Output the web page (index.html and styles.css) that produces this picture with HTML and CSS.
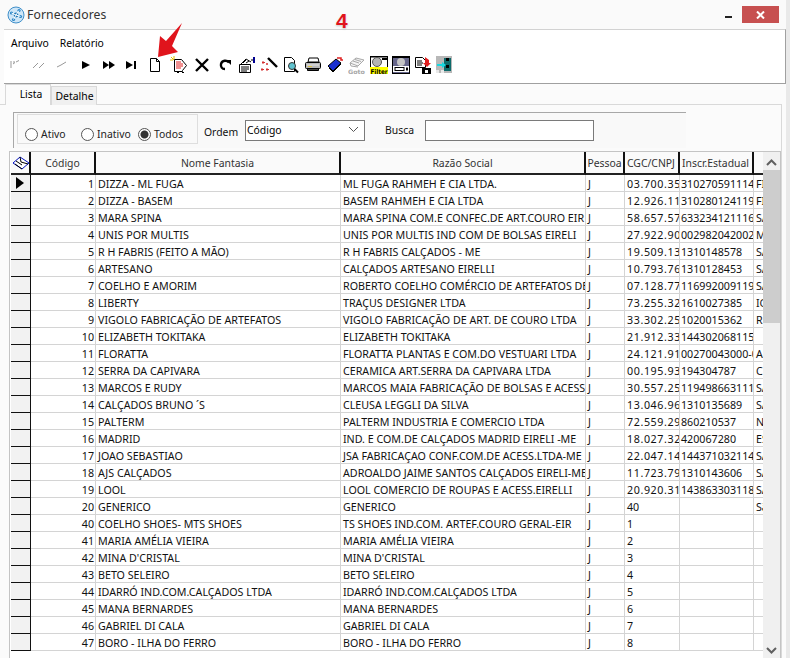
FILE: index.html
```html
<!DOCTYPE html>
<html lang="pt">
<head>
<meta charset="utf-8">
<title>Fornecedores</title>
<link rel="stylesheet" href="styles.css">
</head>
<body>
<div class="window">
  <header class="titlebar">
    <svg class="app-icon" width="18" height="18" viewBox="0 0 18 18"><circle cx="9" cy="9" r="8" fill="#cfe6f7" stroke="#3f8fc9"/><circle cx="9" cy="9" r="2.400" fill="#1f78b8"/><circle cx="4.500" cy="7" r="1.600" fill="#2a86c8"/><circle cx="12" cy="4.500" r="1.600" fill="#2a86c8"/><circle cx="13.500" cy="10.500" r="1.600" fill="#2a86c8"/><circle cx="6.500" cy="13.500" r="1.600" fill="#2a86c8"/><path d="M9 9L4.500 7M9 9L12 4.500M9 9l4.500 1.500M9 9l-2.500 4.500" stroke="#fff"/></svg>
    <span class="title">Fornecedores</span>
    <span class="minimize"></span>
    <span class="close"><svg width="9" height="8" viewBox="0 0 9 8"><path d="M1 .5L8 7.500M8 .5L1 7.500" stroke="#fff" stroke-width="2"/></svg></span>
  </header>

  <section class="toolbar-panel">
    <nav class="menu"><span>Arquivo</span><span>Relatório</span></nav>
    <div class="tools">
      <span class="tool"><svg width="16" height="16" viewBox="0 0 16 16"><path d="M3 4v7M5 5h2M8 5l3-1.500M5 7l2-1.500" stroke="#999" fill="none"/></svg></span>
      <span class="tool"><svg width="16" height="16" viewBox="0 0 16 16"><path d="M2 11l5-5M8 11l5-5" stroke="#999" fill="none"/></svg></span>
      <span class="tool"><svg width="16" height="16" viewBox="0 0 16 16"><path d="M3 10l4-2M7 8l5-3" stroke="#999" fill="none"/></svg></span>
      <span class="tool"><svg width="16" height="16" viewBox="0 0 16 16"><path d="M4 4l8 4-8 4z"/></svg></span>
      <span class="tool"><svg width="16" height="16" viewBox="0 0 16 16"><path d="M2 4l6 4-6 4zM8 4l6 4-6 4z"/></svg></span>
      <span class="tool"><svg width="16" height="16" viewBox="0 0 16 16"><path d="M2 4l7 4-7 4zM10 4h2v8h-2z"/></svg></span>
      <span class="tool"><svg width="16" height="16" viewBox="0 0 16 16"><path d="M3.500 1.500h6l3 3v10h-9zM9.500 1.500v3h3" fill="#fff" stroke="#000"/></svg></span>
      <span class="tool"><svg width="18" height="18" viewBox="0 0 18 18"><path d="M4.500 3.500h7l5 6-4 5v1h-8z" fill="#fff" stroke="#000"/><path d="M6 6h5M6 8h7M6 10h7M6 12h5" stroke="#e02020"/><path d="M1 1l3 3M4 0v3M0 4h3" stroke="#e8c000"/><path d="M12 16.500h2M7 16.500h2" stroke="#000"/></svg></span>
      <span class="tool"><svg width="16" height="16" viewBox="0 0 16 16"><path d="M2 2l12 12M14 2L2 14" stroke="#000" stroke-width="2.400"/></svg></span>
      <span class="tool"><svg width="16" height="16" viewBox="0 0 16 16"><path d="M12 5.500C10 3 5 3 4 7c-.5 3 1 5 4 5" fill="none" stroke="#000" stroke-width="2.400"/><path d="M9 3h5v5z"/></svg></span>
      <span class="tool"><svg width="18" height="18" viewBox="0 0 18 18"><path d="M1.500 8.500h11v8h-11z" fill="#fff" stroke="#000"/><path d="M3 11h8M3 13h8M3 15h6" stroke="#000"/><path d="M3 8l5-5 5 3" fill="#fff" stroke="#000"/><path d="M5 7l3-3M8 7l3-2" stroke="#000"/><path d="M15 1h2v6h-2z" fill="#000090"/><path d="M13 4h2" stroke="#000"/></svg></span>
      <span class="tool"><svg width="18" height="18" viewBox="0 0 18 18"><path d="M8 2l9 9" stroke="#000" stroke-width="2.400"/><path d="M3 5v3M2 6.500h3M2 12v3M1 13.500h3M7 12v3M6 13.500h3M7 7v2M6 8h2" stroke="#d43030"/></svg></span>
      <span class="tool"><svg width="18" height="18" viewBox="0 0 18 18"><path d="M2.500 1.500h7l3 3v11h-10z" fill="#fff" stroke="#000"/><circle cx="10" cy="10" r="3.500" fill="#5fc3cf" stroke="#333"/><path d="M12.500 13l3.500 3.500" stroke="#000" stroke-width="2"/></svg></span>
      <span class="tool"><svg width="18" height="18" viewBox="0 0 18 18"><path d="M5 2h9l1 4H4z" fill="#fff" stroke="#000"/><path d="M1.500 7.500q0-1 1-1h13q1 0 1 1v4q0 1-1 1h-13q-1 0-1-1z" fill="#b8b8b8" stroke="#000"/><path d="M3 9h12" stroke="#e8e8e8"/><path d="M4 10.500h4" stroke="#d8c040"/><path d="M3.500 12.500h11v2h-11z" fill="#444" stroke="#000"/></svg></span>
      <span class="tool"><svg width="18" height="18" viewBox="0 0 18 18"><path d="M2 10l8-7 5 4-8 8z" fill="#1a2fd0" stroke="#000"/><path d="M3 12l4 4 8-8" fill="none" stroke="#000"/><path d="M11 2h4v2h2" fill="none" stroke="#e02020" stroke-width="1.500"/></svg></span>
      <span class="tool"><svg width="18" height="18" viewBox="0 0 18 18"><path d="M2 7l6-5 8 2-6 6z" fill="#f4f4f4" stroke="#a8a8a8"/><path d="M2 7l1 3 7 1M5 5l6 2M7 3.500l6 2" fill="none" stroke="#a8a8a8"/><text class="goto-label" x="0" y="17.500" textLength="17" lengthAdjust="spacingAndGlyphs">Goto</text></svg></span>
      <span class="tool"><svg width="18" height="18" viewBox="0 0 18 18"><rect width="18" height="18" fill="#fff"/><path d="M0 .5h18" stroke="#000" stroke-width="2"/><path d="M12 3h6" stroke="#000" stroke-width="2"/><path d="M.5 0v12M17.500 0v12" stroke="#000"/><circle cx="7" cy="6" r="4.500" fill="#b4b4b4" stroke="#555"/><rect y="11" width="18" height="7" fill="#ffff00"/><text class="filter-label" x=".5" y="17.500" textLength="17" lengthAdjust="spacingAndGlyphs">Filter</text></svg></span>
      <span class="tool"><svg width="18" height="18" viewBox="0 0 18 18"><rect width="18" height="18" fill="#000"/><rect x="1" y="2" width="16" height="15" fill="#66668a"/><circle cx="9" cy="6" r="4" fill="#c4c4c4"/><rect x="1" y="10" width="16" height="6" fill="#fff"/><rect x="3" y="11.500" width="9" height="3" fill="#fff" stroke="#000"/><rect x="14" y="11.500" width="2" height="3" fill="#000"/></svg></span>
      <span class="tool"><svg width="18" height="18" viewBox="0 0 18 18"><path d="M1.500 1.500h7l3 3v7h-10z" fill="#fff" stroke="#000"/><path d="M3 5h5M3 7h6M3 9h5" stroke="#000"/><path d="M11 1v6h-2l4 4 4-4h-2V4z" fill="#e02020"/><path d="M8 12h9v6H8z"/><path d="M11 14h3v3h-3z" fill="#fff"/></svg></span>
      <span class="tool"><svg width="18" height="18" viewBox="0 0 18 18"><rect width="16" height="17" fill="#b8b8b8"/><path d="M8 2h7v13H8z" fill="#0d6b6b"/><path d="M10 2h3v3h-3zM10 9h3v3h-3z" fill="#000"/><path d="M1 9h7" stroke="#18d8e0" stroke-width="2"/><path d="M6 6l4 3-4 3z" fill="#18d8e0"/><path d="M0 14h3v3H0zM5 14h3v3H5z" fill="#e8e8e8"/></svg></span>
    </div>
  </section>

  <div class="tabs">
    <span class="tab tab-active">Lista</span>
    <span class="tab">Detalhe</span>
  </div>

  <main class="page">
    <div class="filters">
      <div class="radio-group">
        <label class="radio"><span class="dot"></span>Ativo</label>
        <label class="radio"><span class="dot"></span>Inativo</label>
        <label class="radio"><span class="dot dot-on"></span>Todos</label>
      </div>
      <span class="field-label label-ordem">Ordem</span>
      <div class="select"><span>Código</span><svg width="11" height="7" viewBox="0 0 11 7"><path d="M1 1l4.500 4.500L10 1" fill="none" stroke="#555"/></svg></div>
      <span class="field-label label-busca">Busca</span>
      <div class="input"></div>
    </div>

    <div class="grid-frame">
      <div class="grid-body">
        <table class="grid">
          <colgroup><col class="c0"><col class="c1"><col class="c2"><col class="c3"><col class="c4"><col class="c5"><col class="c6"><col class="c7"></colgroup>
          <thead>
            <tr>
              <th class="ind"><svg width="18" height="16" viewBox="0 0 18 16"><path d="M1 8l7-6 9 6-7 6z" fill="#fff" stroke="#0010c0"/><path d="M3 9l7 5M8 2l1 5 7 2M4 6l6 4" fill="none" stroke="#000"/></svg></th>
              <th>Código</th><th>Nome Fantasia</th><th>Razão Social</th><th>Pessoa</th><th class="tl">CGC/CNPJ</th><th class="tl">Inscr.Estadual</th><th class="last"></th>
            </tr>
          </thead>
          <tbody>
            <tr><td class="ind"><svg width="8" height="12" viewBox="0 0 8 12"><path d="M0 0l8 6-8 6z"/></svg></td><td class="n">1</td><td>DIZZA - ML FUGA</td><td>ML FUGA RAHMEH E CIA LTDA.</td><td>J</td><td class="w">03.700.350</td><td class="ie">310270591114</td><td>FI</td></tr>
            <tr><td class="ind"></td><td class="n">2</td><td>DIZZA - BASEM</td><td>BASEM RAHMEH E CIA LTDA</td><td>J</td><td class="w">12.926.110</td><td class="ie">310280124119</td><td>FI</td></tr>
            <tr><td class="ind"></td><td class="n">3</td><td>MARA SPINA</td><td>MARA SPINA COM.E CONFEC.DE ART.COURO EIR</td><td>J</td><td class="w">58.657.578</td><td class="ie">633234121116</td><td>SA</td></tr>
            <tr><td class="ind"></td><td class="n">4</td><td>UNIS POR MULTIS</td><td>UNIS POR MULTIS IND COM DE BOLSAS EIRELI</td><td>J</td><td class="w">27.922.900</td><td class="ie">002982042002</td><td>MG</td></tr>
            <tr><td class="ind"></td><td class="n">5</td><td>R H FABRIS (FEITO A MÃO)</td><td>R H FABRIS CALÇADOS - ME</td><td>J</td><td class="w">19.509.135</td><td class="ie">1310148578</td><td>SA</td></tr>
            <tr><td class="ind"></td><td class="n">6</td><td>ARTESANO</td><td>CALÇADOS ARTESANO EIRELLI</td><td>J</td><td class="w">10.793.762</td><td class="ie">1310128453</td><td>SA</td></tr>
            <tr><td class="ind"></td><td class="n">7</td><td>COELHO E AMORIM</td><td>ROBERTO COELHO COMÉRCIO DE ARTEFATOS DE</td><td>J</td><td class="w">07.128.779</td><td class="ie">116992009119</td><td>SA</td></tr>
            <tr><td class="ind"></td><td class="n">8</td><td>LIBERTY</td><td>TRAÇUS DESIGNER LTDA</td><td>J</td><td class="w">73.255.325</td><td class="ie">1610027385</td><td>IG</td></tr>
            <tr><td class="ind"></td><td class="n">9</td><td>VIGOLO FABRICAÇÃO DE ARTEFATOS</td><td>VIGOLO FABRICAÇÃO DE ART. DE COURO LTDA</td><td>J</td><td class="w">33.302.254</td><td class="ie">1020015362</td><td>R</td></tr>
            <tr><td class="ind"></td><td class="n">10</td><td>ELIZABETH TOKITAKA</td><td>ELIZABETH TOKITAKA</td><td>J</td><td class="w">21.912.334</td><td class="ie">144302068115</td><td></td></tr>
            <tr><td class="ind"></td><td class="n">11</td><td>FLORATTA</td><td>FLORATTA PLANTAS E COM.DO VESTUARI LTDA</td><td>J</td><td class="w">24.121.914</td><td class="ie">00270043000-0</td><td>A</td></tr>
            <tr><td class="ind"></td><td class="n">12</td><td>SERRA DA CAPIVARA</td><td>CERAMICA ART.SERRA DA CAPIVARA LTDA</td><td>J</td><td class="w">00.195.936</td><td class="ie">194304787</td><td>C</td></tr>
            <tr><td class="ind"></td><td class="n">13</td><td>MARCOS E RUDY</td><td>MARCOS MAIA FABRICAÇÃO DE BOLSAS E ACESS</td><td>J</td><td class="w">30.557.258</td><td class="ie">119498663111</td><td>SA</td></tr>
            <tr><td class="ind"></td><td class="n">14</td><td>CALÇADOS BRUNO ´S</td><td>CLEUSA LEGGLI DA SILVA</td><td>J</td><td class="w">13.046.969</td><td class="ie">1310135689</td><td>SA</td></tr>
            <tr><td class="ind"></td><td class="n">15</td><td>PALTERM</td><td>PALTERM INDUSTRIA E COMERCIO LTDA</td><td>J</td><td class="w">72.559.297</td><td class="ie">860210537</td><td>N</td></tr>
            <tr><td class="ind"></td><td class="n">16</td><td>MADRID</td><td>IND. E COM.DE CALÇADOS MADRID EIRELI -ME</td><td>J</td><td class="w">18.027.322</td><td class="ie">420067280</td><td>ES</td></tr>
            <tr><td class="ind"></td><td class="n">17</td><td>JOAO SEBASTIAO</td><td>JSA FABRICAÇAO CONF.COM.DE ACESS.LTDA-ME</td><td>J</td><td class="w">22.047.144</td><td class="ie">144371032114</td><td>SA</td></tr>
            <tr><td class="ind"></td><td class="n">18</td><td>AJS CALÇADOS</td><td>ADROALDO JAIME SANTOS CALÇADOS EIRELI-ME</td><td>J</td><td class="w">11.723.794</td><td class="ie">1310143606</td><td>SA</td></tr>
            <tr><td class="ind"></td><td class="n">19</td><td>LOOL</td><td>LOOL COMERCIO DE ROUPAS E ACESS.EIRELLI</td><td>J</td><td class="w">20.920.313</td><td class="ie">143863303118</td><td>SA</td></tr>
            <tr><td class="ind"></td><td class="n">20</td><td>GENERICO</td><td>GENERICO</td><td>J</td><td>40</td><td></td><td>Sã</td></tr>
            <tr><td class="ind"></td><td class="n">40</td><td>COELHO SHOES- MTS SHOES</td><td>TS SHOES IND.COM. ARTEF.COURO GERAL-EIR</td><td>J</td><td>1</td><td></td><td></td></tr>
            <tr><td class="ind"></td><td class="n">41</td><td>MARIA AMÉLIA VIEIRA</td><td>MARIA AMÉLIA VIEIRA</td><td>J</td><td>2</td><td></td><td></td></tr>
            <tr><td class="ind"></td><td class="n">42</td><td>MINA D'CRISTAL</td><td>MINA D'CRISTAL</td><td>J</td><td>3</td><td></td><td></td></tr>
            <tr><td class="ind"></td><td class="n">43</td><td>BETO SELEIRO</td><td>BETO SELEIRO</td><td>J</td><td>4</td><td></td><td></td></tr>
            <tr><td class="ind"></td><td class="n">44</td><td>IDARRÓ IND.COM.CALÇADOS LTDA</td><td>IDARRÓ IND.COM.CALÇADOS LTDA</td><td>J</td><td>5</td><td></td><td></td></tr>
            <tr><td class="ind"></td><td class="n">45</td><td>MANA BERNARDES</td><td>MANA BERNARDES</td><td>J</td><td>6</td><td></td><td></td></tr>
            <tr><td class="ind"></td><td class="n">46</td><td>GABRIEL DI CALA</td><td>GABRIEL DI CALA</td><td>J</td><td>7</td><td></td><td></td></tr>
            <tr><td class="ind"></td><td class="n">47</td><td>BORO - ILHA DO FERRO</td><td>BORO - ILHA DO FERRO</td><td>J</td><td>8</td><td></td><td></td></tr>
          </tbody>
        </table>
      </div>
      <div class="scrollbar">
        <svg class="sb-arrow" width="11" height="7" viewBox="0 0 11 7"><path d="M1 6l4.500-4.500L10 6" fill="none" stroke="#606060" stroke-width="2"/></svg>
        <div class="sb-thumb"></div>
        <div class="sb-track"></div>
        <svg class="sb-arrow" width="11" height="7" viewBox="0 0 11 7"><path d="M1 1l4.500 4.500L10 1" fill="none" stroke="#606060" stroke-width="2"/></svg>
      </div>
    </div>
  </main>

  <svg class="red-arrow" width="30" height="38" viewBox="0 0 30 38"><path d="M3 35L5 14l6 5L27 1 17 24l6 6z" fill="#e0141c"/></svg>
  <span class="step-number">4</span>
</div>
</body>
</html>
```
FILE: styles.css
```css
* { box-sizing: border-box; }
html, body { margin: 0; padding: 0; }
body {
  width: 790px;
  height: 658px;
  overflow: hidden;
  background: #fbfbfb;
  font-family: "Noto Sans", "Liberation Sans", sans-serif;
  font-size: 10.400px;
  color: #000;
}
.window {
  position: relative;
  width: 790px;
  height: 658px;
  display: flex;
  flex-direction: column;
  overflow: hidden;
  border-right: 4px solid #e9e9e9;
}
.titlebar {
  height: 29px;
  flex: none;
  display: flex;
  align-items: flex-start;
  padding: 6px 7px 0 7px;
  background: #fafafa;
}
.app-icon { flex: none; }
.title {
  margin-left: 2px;
  font-size: 12.200px;
  line-height: 18px;
  letter-spacing: .1px;
  color: #333;
}
.minimize {
  width: 7px;
  height: 2px;
  margin: 10px 0 0 auto;
  background: #222;
}
.close {
  width: 37px;
  height: 17px;
  margin: 0 0 0 10px;
  display: flex;
  align-items: center;
  justify-content: center;
  background: #c75050;
}
.toolbar-panel {
  flex: none;
  height: 55px;
  margin-left: 4px;
  background: #fff;
  border-top: 1px solid #d2d2d2;
  border-right: 1px solid #a0a0a0;
  border-bottom: 1px solid #a0a0a0;
}
.menu {
  display: flex;
  gap: 11px;
  padding: 6px 0 0 7px;
  height: 25px;
  line-height: 14px;
}
.tools {
  display: flex;
  height: 22px;
}
.tool {
  flex: none;
  width: 23.300px;
  height: 20px;
  display: flex;
  align-items: center;
  justify-content: center;
}
.tool:nth-child(n+10) { width: 22px; }
.tool svg { display: block; }
.goto-label {
  font-family: "DejaVu Sans", sans-serif;
  font-size: 6px;
  font-weight: 700;
  fill: #a8a8a8;
}
.filter-label {
  font-family: "DejaVu Sans", sans-serif;
  font-size: 6.500px;
  font-weight: 700;
  fill: #000;
}
.tabs {
  flex: none;
  height: 20px;
  display: flex;
  padding-left: 5px;
  position: relative;
}
.tab {
  width: 46px;
  height: 19px;
  margin-top: 2px;
  padding: 2px 0 0 1px;
  text-align: center;
  line-height: 15px;
  background: #f0f0f0;
  border: 1px solid #d9d9d9;
  border-bottom: 0;
}
.tab-active {
  height: 21px;
  margin-top: 0;
  padding: 2px 0 0 6px;
  background: #fbfbfb;
  position: relative;
  z-index: 1;
}
.page {
  flex: 1;
  min-height: 0;
  width: 782px;
  padding: 7px 0 0 5px;
  border-top: 1px solid #d9d9d9;
  border-right: 1px solid #d9d9d9;
  display: flex;
  flex-direction: column;
}
.filters {
  flex: none;
  height: 36px;
  width: 673px;
  margin-left: 8px;
  padding: 1px 0 0 3px;
  display: flex;
  align-items: flex-start;
  background: #f9f9f9;
  border-top: 1px solid #a8a8a8;
  border-left: 1px solid #a8a8a8;
}
.radio-group {
  width: 181px;
  height: 30px;
  padding: 11px 0 0 7px;
  display: flex;
  border: 1px solid #dedede;
  background: #f9f9f9;
}
.radio {
  display: flex;
  align-items: center;
  height: 16px;
  line-height: 16px;
  color: #222;
}
.radio:nth-child(1) { width: 56px; }
.radio:nth-child(2) { width: 57px; }
.dot {
  width: 13px;
  height: 13px;
  margin-right: 3px;
  border: 1px solid #555;
  border-radius: 50%;
  background: #fff;
  flex: none;
}
.dot-on {
  background: radial-gradient(circle, #333 0 3.500px, #fff 4.500px);
}
.field-label {
  line-height: 15px;
  color: #111;
}
.label-ordem { margin: 11px 0 0 6px; width: 41px; }
.label-busca { margin: 9px 0 0 20px; width: 40px; }
.select {
  width: 120px;
  height: 21px;
  margin-top: 6px;
  padding: 0 5px 2px 1px;
  display: flex;
  align-items: center;
  justify-content: space-between;
  background: #fff;
  border: 1px solid #7a7a7a;
}
.input {
  width: 169px;
  height: 21px;
  margin-top: 6px;
  background: #fff;
  border: 1px solid #7a7a7a;
}
.grid-frame {
  flex: 1;
  min-height: 0;
  margin-top: 3px;
  margin-left: 4px;
  width: 772px;
  display: flex;
  background: #fff;
  border-top: 1px solid #c4c4c4;
  border-left: 1px solid #c4c4c4;
  border-right: 1px solid #c4c4c4;
}
.grid-body {
  width: 754px;
  flex: none;
  overflow: hidden;
}
.grid {
  table-layout: fixed;
  border-collapse: separate;
  border-spacing: 0;
  width: 744px;
  margin-left: 1px;
  line-height: 14px;
  font-size: 10.700px;
}
.c0 { width: 20px; }
.c1 { width: 65px; }
.c2 { width: 245px; }
.c3 { width: 245px; }
.c4 { width: 39px; }
.c5 { width: 55px; }
.c6 { width: 74px; }
.c7 { width: 11px; }
.grid th {
  height: 23px;
  padding: 0 1px;
  font-weight: 400;
  font-size: 10.400px;
  text-align: center;
  color: #333;
  background: #fafafa;
  border-right: 2px solid #111;
  border-bottom: 2px solid #222;
  overflow: hidden;
  white-space: nowrap;
}
.grid th.tl { text-align: left; padding-left: 2px; }
.grid th.last { border-right: 0; }
.grid th.ind svg { display: block; margin: 0 auto; }
.grid td {
  height: 17px;
  padding: 1px 0 0 2px;
  overflow: hidden;
  white-space: nowrap;
  color: #111;
  border-right: 1px solid #d4d4d4;
  border-bottom: 1px solid #d4d4d4;
}
.grid td:last-child { border-right: 0; }
.grid td.n { text-align: right; padding: 1px 1px 0 0; }
.grid td.w { letter-spacing: .6px; padding-left: 2px; }
.grid td.ie { padding-left: 1px; }
.grid td.ind {
  padding: 0 0 0 5px;
  background: #f2f2f2;
  border-right: 1px solid #111;
  border-bottom: 1px solid #111;
}
.grid td.ind svg { display: block; }
.scrollbar {
  width: 17px;
  flex: none;
  margin-left: -1px;
  display: flex;
  flex-direction: column;
  align-items: center;
  background: #f0f0f0;
}
.sb-arrow { flex: none; margin: 7px 0 4px; }
.sb-thumb {
  width: 100%;
  height: 153px;
  flex: none;
  background: #cdcdcd;
}
.sb-track { flex: 1; }
.red-arrow {
  position: absolute;
  left: 155px;
  top: 22px;
}
.step-number {
  position: absolute;
  left: 336px;
  top: 9px;
  font-family: "Liberation Sans", sans-serif;
  font-size: 21px;
  line-height: 24px;
  font-weight: 700;
  color: #e0141c;
  text-shadow: 0 0 2px #fff, 0 1px 2px #bbb;
}
```
